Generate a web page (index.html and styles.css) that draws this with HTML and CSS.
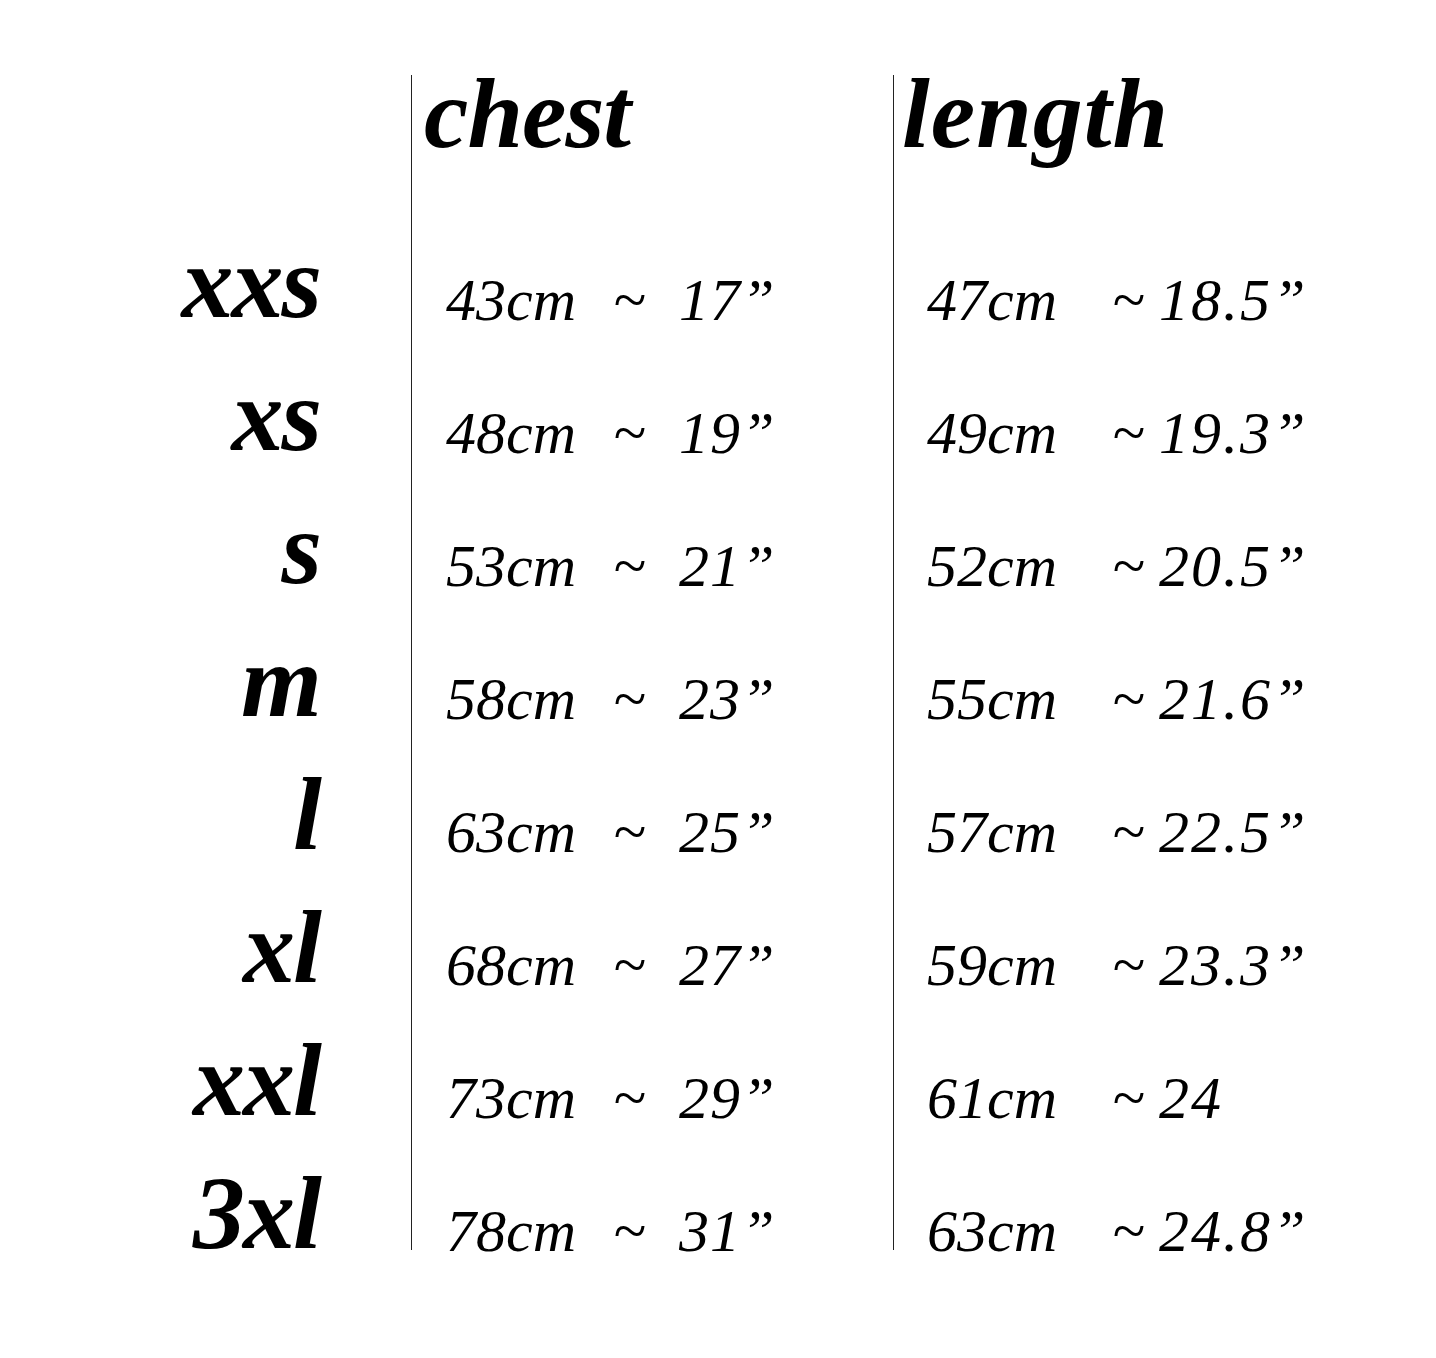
FILE: index.html
```html
<!DOCTYPE html>
<html>
<head>
<meta charset="utf-8">
<link rel="stylesheet" href="styles.css">
</head>
<body>
<div class="chart">
  <div class="corner"></div>
  <div class="head chest-col"><span class="head-text">chest</span></div>
  <div class="head length-col"><span class="head-text">length</span></div>

  <div class="size"><span class="size-text">xxs</span></div>
  <div class="cell chest-col"><div class="val"><span class="num">43cm</span><span class="tilde">~</span><span class="inch">17”</span></div></div>
  <div class="cell length-col"><div class="val"><span class="num">47cm</span><span class="tilde">~</span><span class="inch">18.5”</span></div></div>

  <div class="size"><span class="size-text">xs</span></div>
  <div class="cell chest-col"><div class="val"><span class="num">48cm</span><span class="tilde">~</span><span class="inch">19”</span></div></div>
  <div class="cell length-col"><div class="val"><span class="num">49cm</span><span class="tilde">~</span><span class="inch">19.3”</span></div></div>

  <div class="size"><span class="size-text">s</span></div>
  <div class="cell chest-col"><div class="val"><span class="num">53cm</span><span class="tilde">~</span><span class="inch">21”</span></div></div>
  <div class="cell length-col"><div class="val"><span class="num">52cm</span><span class="tilde">~</span><span class="inch">20.5”</span></div></div>

  <div class="size"><span class="size-text">m</span></div>
  <div class="cell chest-col"><div class="val"><span class="num">58cm</span><span class="tilde">~</span><span class="inch">23”</span></div></div>
  <div class="cell length-col"><div class="val"><span class="num">55cm</span><span class="tilde">~</span><span class="inch">21.6”</span></div></div>

  <div class="size"><span class="size-text">l</span></div>
  <div class="cell chest-col"><div class="val"><span class="num">63cm</span><span class="tilde">~</span><span class="inch">25”</span></div></div>
  <div class="cell length-col"><div class="val"><span class="num">57cm</span><span class="tilde">~</span><span class="inch">22.5”</span></div></div>

  <div class="size"><span class="size-text">xl</span></div>
  <div class="cell chest-col"><div class="val"><span class="num">68cm</span><span class="tilde">~</span><span class="inch">27”</span></div></div>
  <div class="cell length-col"><div class="val"><span class="num">59cm</span><span class="tilde">~</span><span class="inch">23.3”</span></div></div>

  <div class="size"><span class="size-text">xxl</span></div>
  <div class="cell chest-col"><div class="val"><span class="num">73cm</span><span class="tilde">~</span><span class="inch">29”</span></div></div>
  <div class="cell length-col"><div class="val"><span class="num">61cm</span><span class="tilde">~</span><span class="inch">24</span></div></div>

  <div class="size"><span class="size-text">3xl</span></div>
  <div class="cell chest-col"><div class="val"><span class="num">78cm</span><span class="tilde">~</span><span class="inch">31”</span></div></div>
  <div class="cell length-col"><div class="val"><span class="num">63cm</span><span class="tilde">~</span><span class="inch">24.8”</span></div></div>
</div>
</body>
</html>
```
FILE: styles.css
```css
html, body {
  margin: 0;
  padding: 0;
  background: #fff;
}

body {
  font-family: "Liberation Serif", "Times New Roman", serif;
  color: #000;
  padding-bottom: 108px;
}

.chart {
  display: grid;
  grid-template-columns: 411px 482px 1fr;
  grid-template-rows: 111px repeat(8, 133px);
  margin-top: 75px;
}

.chest-col,
.length-col {
  border-left: 1px solid #222;
}

.head {
  display: flex;
  align-items: flex-start;
}

.head-text {
  font-size: 100px;
  font-weight: bold;
  font-style: italic;
  line-height: 78px;
}

.head.chest-col { padding-left: 12px; }
.head.chest-col .head-text { letter-spacing: -1px; }
.head.length-col { padding-left: 8px; }
.head.length-col .head-text { letter-spacing: 1px; }

.size {
  display: flex;
  align-items: flex-end;
  justify-content: flex-end;
  padding-right: 91px;
}

.size-text {
  font-size: 104px;
  font-weight: bold;
  font-style: italic;
  line-height: 74px;
  letter-spacing: -2px;
}

.cell {
  display: flex;
  align-items: flex-end;
}

.val {
  display: flex;
  font-size: 60px;
  font-style: italic;
  line-height: 38px;
  white-space: nowrap;
}

.cell.chest-col { padding-left: 34px; }
.cell.length-col { padding-left: 33px; }

.chest-col .num { width: 167px; }
.chest-col .tilde { width: 66px; }
.chest-col .inch { letter-spacing: 1px; }
.length-col .num { width: 185px; }
.length-col .tilde { width: 47px; }
.length-col .inch { letter-spacing: 2px; }
```
